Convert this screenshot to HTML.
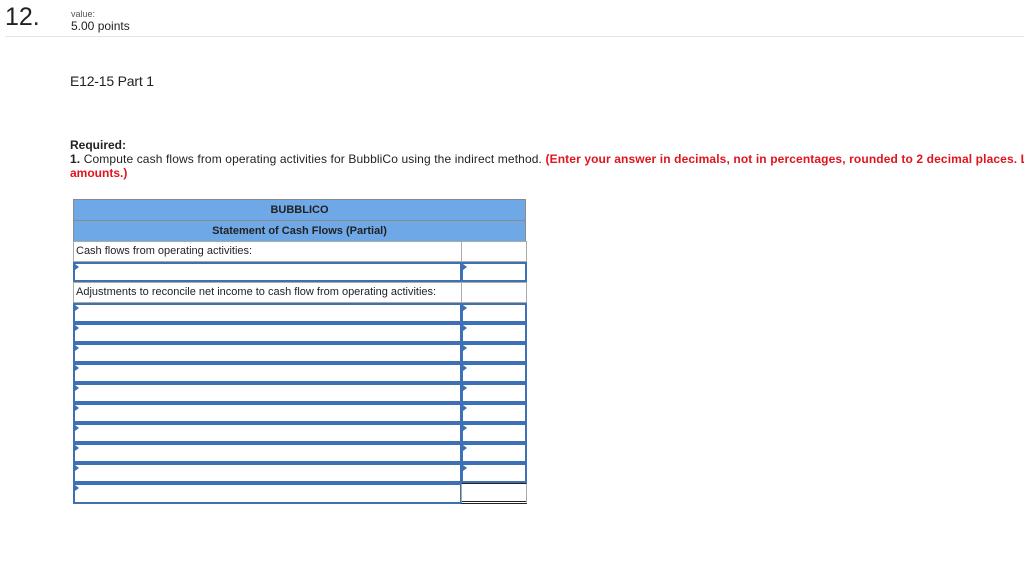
<!DOCTYPE html>
<html><head><style>
body{margin:0;width:1024px;height:579px;background:#fff;font-family:"Liberation Sans",Arial,sans-serif;color:#222;position:relative;overflow:hidden}
.a{position:absolute;white-space:nowrap}
.hdr{position:absolute;left:73px;width:453px;background:#6fa8e6;border:1px solid #8a8a8a;box-sizing:border-box;text-align:center;font-weight:bold;font-size:11px;line-height:21px;color:#222}
.lbl{position:absolute;left:73px;width:389px;height:21px;border:1px solid #aaa;box-sizing:border-box;font-size:11px;line-height:19px;padding-left:2px}
.lblr{position:absolute;left:461px;width:66px;height:21px;border:1px solid #aaa;box-sizing:border-box}
.in{position:absolute;left:73px;width:389px;height:20px;border:2px solid #3d70b4;box-sizing:border-box;background:#fff}
.inr{position:absolute;left:461px;width:66px;height:20px;border:2px solid #3d70b4;box-sizing:border-box;background:#fff}
.in:before,.inr:before{content:"";position:absolute;left:0;top:0;border-left:4px solid #3d70b4;border-top:3px solid transparent;border-bottom:3px solid transparent}
</style></head><body>
<div class="a" style="left:5px;top:3px;font-size:25px;color:#222">12.</div>
<div class="a" style="left:71px;top:9px;font-size:9px;color:#555">value:</div>
<div class="a" style="left:71px;top:19px;font-size:12px">5.00 points</div>
<div class="a" style="left:5px;top:36px;width:1019px;height:1px;background:#e4e4e4"></div>
<div class="a" style="left:70px;top:73px;font-size:14px;letter-spacing:-0.2px">E12-15 Part 1</div>
<div class="a" style="left:70px;top:138px;font-size:12px;font-weight:bold">Required:</div>
<div class="a" style="left:70px;top:152px;font-size:12px;letter-spacing:0.12px"><b>1.</b> Compute cash flows from operating activities for BubbliCo using the indirect method. <b style="color:#e0141e">(Enter your answer in decimals, not in percentages, rounded to 2 decimal places. L</b></div>
<div class="a" style="left:70px;top:166px;font-size:12px;font-weight:bold;color:#e0141e">amounts.)</div>

<div class="hdr" style="top:199px;height:22px">BUBBLICO</div>
<div class="hdr" style="top:220px;height:22px;line-height:20px">Statement of Cash Flows (Partial)</div>
<div class="lbl" style="top:241px">Cash flows from operating activities:</div><div class="lblr" style="top:241px"></div>
<div class="in" style="top:262px"></div><div class="inr" style="top:262px"></div>
<div class="lbl" style="top:282px">Adjustments to reconcile net income to cash flow from operating activities:</div><div class="lblr" style="top:282px"></div>
<div class="in" style="top:303px"></div><div class="inr" style="top:303px"></div>
<div class="in" style="top:323px"></div><div class="inr" style="top:323px"></div>
<div class="in" style="top:343px"></div><div class="inr" style="top:343px"></div>
<div class="in" style="top:363px"></div><div class="inr" style="top:363px"></div>
<div class="in" style="top:383px"></div><div class="inr" style="top:383px"></div>
<div class="in" style="top:403px"></div><div class="inr" style="top:403px"></div>
<div class="in" style="top:423px"></div><div class="inr" style="top:423px"></div>
<div class="in" style="top:443px"></div><div class="inr" style="top:443px"></div>
<div class="in" style="top:463px"></div><div class="inr" style="top:463px"></div>
<div class="in" style="top:483px;height:21px"></div>
<div class="a" style="left:461px;top:483px;width:66px;height:21px;border:1px solid #aaa;border-top:1px solid #222;border-bottom:3px double #222;box-sizing:border-box"></div>
</body></html>
